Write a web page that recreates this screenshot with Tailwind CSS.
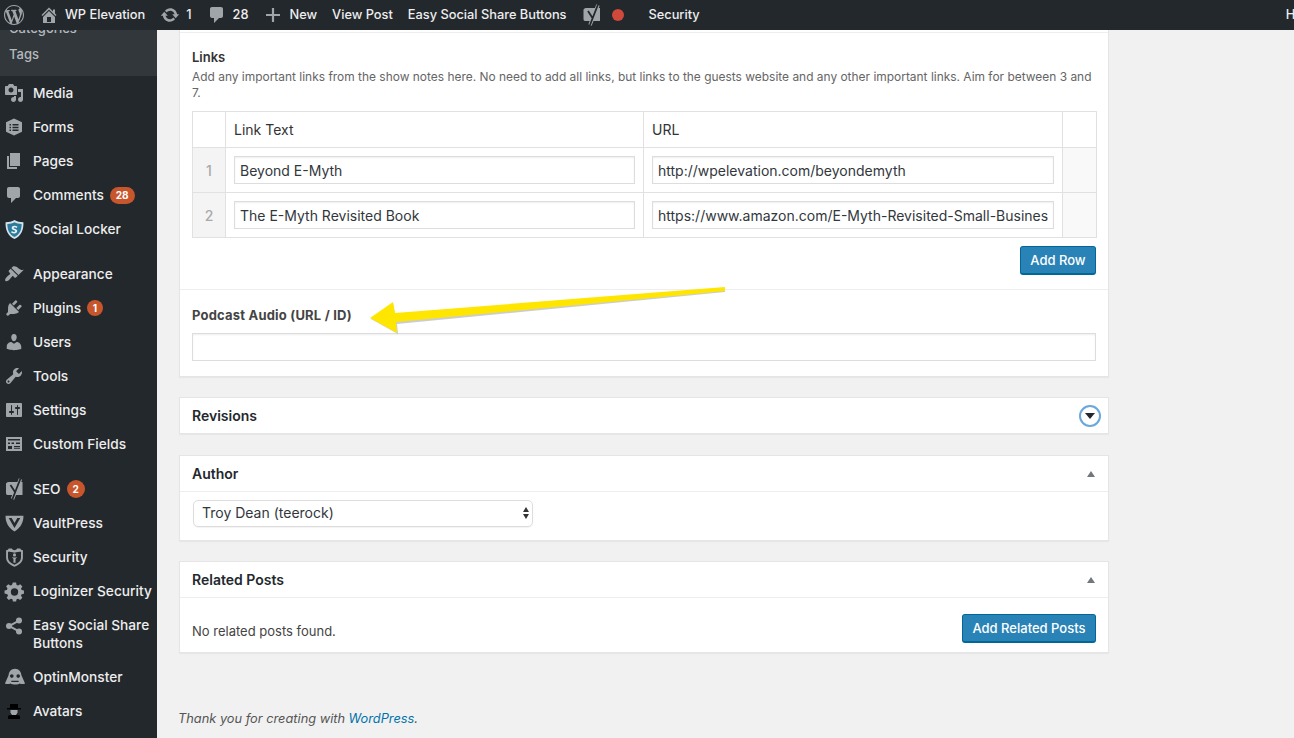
<!DOCTYPE html>
<html lang="en">

<head>
    <meta charset="UTF-8">
    <title>Edit Post</title>
    <script src="https://cdn.jsdelivr.net/npm/@tailwindcss/browser@4"></script>
</head>

<body class="h-[738px] w-[1294px] overflow-hidden bg-[#f1f1f1] font-['Inter',sans-serif] text-[14px] text-[#444]">
    <!-- admin bar -->
    <header class="relative z-10 flex h-[30px] items-center overflow-hidden whitespace-nowrap bg-[#23282d] text-[12.800px] font-medium text-[#eee]">
        <svg class="ml-[4px] h-[20px] w-[20px] shrink-0 fill-[#a0a5aa]" viewBox="0 0 20 20"><path d="M20 10c0-5.51-4.49-10-10-10C4.48 0 0 4.49 0 10c0 5.52 4.48 10 10 10 5.51 0 10-4.48 10-10zM7.78 15.37L4.37 6.22c.55-.02 1.17-.08 1.17-.08.5-.06.44-1.13-.06-1.11 0 0-1.45.11-2.37.11-.18 0-.37 0-.58-.01C4.12 2.69 6.87 1.11 10 1.11c2.33 0 4.45.87 6.05 2.34-.68-.11-1.65.39-1.65 1.58 0 .74.45 1.36.9 2.1.35.61.55 1.36.55 2.46 0 1.49-1.4 5-1.4 5l-3.03-8.37c.54-.02.82-.17.82-.17.5-.05.44-1.25-.06-1.22 0 0-1.44.12-2.38.12-.87 0-2.33-.12-2.33-.12-.5-.03-.56 1.2-.06 1.22l.92.08 1.26 3.41zM17.41 10c.24-.64.74-1.87.43-4.25.7 1.29 1.05 2.71 1.05 4.25 0 3.29-1.73 6.24-4.4 7.78.97-2.59 1.94-5.2 2.92-7.78zM6.1 18.09C3.12 16.65 1.11 13.53 1.11 10c0-1.3.23-2.48.72-3.59C3.25 10.3 4.67 14.2 6.1 18.09zm4.03-6.63l2.58 6.98c-.86.29-1.76.45-2.71.45-.79 0-1.57-.11-2.29-.33.81-2.38 1.62-4.74 2.42-7.1z"/></svg>
        <svg class="ml-[15px] h-[20px] w-[20px] shrink-0 fill-[#a0a5aa]" viewBox="0 0 20 20"><path d="M16 8.5l1.53 1.53-1.06 1.06L10 4.62l-6.47 6.47-1.06-1.06L10 2.5l4 4v-2h2v4zm-6-2.46l6 5.99V18H4v-5.97zM12 17v-5H8v5h4z"/></svg>
        <span class="ml-[6px]">WP Elevation</span>
        <svg class="ml-[15px] h-[20px] w-[20px] shrink-0 fill-[#a0a5aa]" viewBox="0 0 20 20"><path d="M10.2 3.28c3.53 0 6.43 2.61 6.92 6h2.08l-3.5 4-3.5-4h2.32c-.45-1.97-2.21-3.45-4.32-3.45-1.45 0-2.73.71-3.54 1.78L4.95 5.66C6.23 4.2 8.11 3.28 10.2 3.28zm-.4 13.44c-3.52 0-6.43-2.61-6.92-6H.8l3.5-4c1.17 1.33 2.33 2.67 3.5 4H5.48c.45 1.97 2.21 3.45 4.32 3.45 1.45 0 2.73-.71 3.54-1.78l1.71 1.95c-1.28 1.46-3.15 2.38-5.25 2.38z"/></svg>
        <span class="ml-[6px]">1</span>
        <svg class="ml-[15px] h-[20px] w-[20px] shrink-0 fill-[#a0a5aa]" viewBox="0 0 20 20"><path d="M5 2h9c1.1 0 2 .9 2 2v7c0 1.1-.9 2-2 2h-2l-5 5v-5H5c-1.1 0-2-.9-2-2V4c0-1.1.9-2 2-2z"/></svg>
        <span class="ml-[6px]">28</span>
        <svg class="ml-[15px] h-[20px] w-[20px] shrink-0 fill-[#a0a5aa]" viewBox="0 0 20 20"><path d="M17 8.900v2.200h-5.900V17H8.900v-5.900H3V8.900h5.900V3h2.200v5.900H17z"/></svg>
        <span class="ml-[6px]">New</span>
        <span class="ml-[15px]">View Post</span>
        <span class="ml-[15px]">Easy Social Share Buttons</span>
        <svg class="ml-[16px] h-[24px] w-[18px] shrink-0" viewBox="0 0 18 24"><path fill="#a0a5aa" d="M3 5h14v13H2c-1 0-1.500-1-1.500-2V7c0-1 1-2 2.500-2z"/><path fill="none" stroke="#a0a5aa" stroke-width="3.500" d="M15 2L7 22"/><path fill="none" stroke="#23282d" stroke-width="1.800" d="M15 1.500L7 22M5 8l4.500 7"/></svg>
        <span class="ml-[11px] h-[12px] w-[12px] shrink-0 rounded-full bg-[#d0493a]"></span>
        <span class="ml-[25px]">Security</span>
        <span class="ml-[586px]">Howdy, Troy</span>
    </header>

    <div class="flex h-[708px]">
        <!-- sidebar -->
        <nav class="w-[157px] shrink-0 overflow-hidden bg-[#23282d] text-[13.700px] font-medium text-[#eee]">
            <ul class="-mt-[14px] bg-[#32373c] pb-[8px] text-[13px] text-[#b4b9be]">
                <li class="flex h-[26px] items-center pl-[9px]">Categories</li>
                <li class="flex h-[26px] items-center pl-[9px]">Tags</li>
            </ul>
            <a class="flex h-[34px] items-center pl-[4px]"><svg class="mr-[9px] h-[20px] w-[20px] shrink-0 fill-[#a0a5aa]" viewBox="0 0 20 20"><path d="M13 11V4c0-.55-.45-1-1-1h-1.670L9 1H5L3.670 3H2c-.55 0-1 .45-1 1v7c0 .55.45 1 1 1h10c.55 0 1-.45 1-1zM7 4.500c1.380 0 2.500 1.120 2.500 2.500S8.380 9.500 7 9.500 4.500 8.380 4.500 7 5.620 4.500 7 4.500zM14 6h5v10.500c0 1.380-1.120 2.500-2.500 2.500S14 17.880 14 16.500s1.120-2.500 2.500-2.500c.17 0 .34.02.5.05V9h-3V6zm-4 8.050V13h2v3.500c0 1.380-1.120 2.500-2.500 2.500S7 17.880 7 16.500 8.120 14 9.500 14c.17 0 .34.02.5.05z"/></svg>Media</a>
            <a class="flex h-[34px] items-center pl-[4px]"><svg class="mr-[9px] h-[20px] w-[20px] shrink-0 fill-[#a0a5aa]" viewBox="0 0 20 20"><path fill-rule="evenodd" d="M10 1.500l8 3.700v9.600L10 18.500l-8-3.700V5.200zM5.500 7v1.500H7V7zm3 0v1.500h6V7zm-3 2.800v1.500H7V9.800zm3 0v1.500h6V9.800zm-3 2.700V14H7v-1.500zm3 0V14h6v-1.500z"/></svg>Forms</a>
            <a class="flex h-[34px] items-center pl-[4px]"><svg class="mr-[9px] h-[20px] w-[20px] shrink-0 fill-[#a0a5aa]" viewBox="0 0 20 20"><path d="M6 15V2h10v13H6zm-1 1h8v2H3V5h2v11z"/></svg>Pages</a>
            <a class="flex h-[34px] items-center pl-[4px]"><svg class="mr-[9px] h-[20px] w-[20px] shrink-0 fill-[#a0a5aa]" viewBox="0 0 20 20"><path d="M5 2h9c1.100 0 2 .9 2 2v7c0 1.100-.9 2-2 2h-2l-5 5v-5H5c-1.100 0-2-.9-2-2V4c0-1.100.9-2 2-2z"/></svg>Comments<span class="ml-[6px] flex h-[17px] items-center rounded-full bg-[#c8562c] px-[6px] text-[10px] font-bold text-white">28</span></a>
            <a class="flex h-[34px] items-center pl-[4px]"><svg class="mr-[8px] h-[21px] w-[21px] shrink-0" viewBox="0 0 20 20"><path fill="#d5e3ea" d="M10 1c2.500 1.500 5 2 8.500 2 .3 7-2 13-8.500 16C3.500 16 1.200 10 1.500 3 5 3 7.500 2.500 10 1z"/><path fill="#2c7a9c" d="M10 3.200c2 1 4 1.500 6.800 1.600 0 5.500-1.800 10-6.800 12.300-5-2.300-6.800-6.800-6.800-12.300C6 4.700 8 4.200 10 3.200z"/><path fill="#e8f1f5" d="M12.800 7.300c-.8-.5-1.800-.8-2.800-.8-1.500 0-2.700.8-2.700 2.100 0 2.300 3.500 1.700 3.500 2.900 0 .5-.5.8-1.100.8-.8 0-1.700-.4-2.300-.9l-.6 1.400c.8.6 1.900.9 2.900.9 1.700 0 2.900-.9 2.900-2.300 0-2.400-3.500-1.800-3.500-2.900 0-.4.4-.6 1-.6.7 0 1.400.2 2 .6z"/></svg>Social Locker</a>

            <a class="mt-[11px] flex h-[34px] items-center pl-[4px]"><svg class="mr-[9px] h-[20px] w-[20px] shrink-0 fill-[#a0a5aa]" viewBox="0 0 20 20"><path d="M14.480 11.060L7.410 3.990l1.500-1.500c.5-.56 2.300-.47 3.510.32 1.210.8 1.430 1.280 2.910 2.100 1.180.64 2.450 1.260 4.450.85zm-.71.71L6.700 4.700 4.930 6.470c-.39.39-.39 1.020 0 1.410l1.060 1.060c.39.39.39 1.030 0 1.420-.6.6-1.430 1.110-2.210 1.690-.35.26-.7.53-1.010.84-1.340 1.340-2.270 3-1.270 4s2.660.07 4-1.270c.31-.31.58-.66.84-1.010.58-.78 1.090-1.610 1.690-2.210.39-.39 1.030-.39 1.420 0l1.060 1.060c.39.39 1.020.39 1.410 0z"/></svg>Appearance</a>
            <a class="flex h-[34px] items-center pl-[4px]"><svg class="mr-[9px] h-[20px] w-[20px] shrink-0 fill-[#a0a5aa]" viewBox="0 0 20 20"><path d="M13.110 4.360L9.870 7.600 8 5.730l3.240-3.240c.35-.34 1.050-.2 1.560.32.52.51.66 1.210.31 1.550zm-8 1.770l.91-1.120 9.010 9.010-1.190.84c-.71.71-2.630 1.160-3.820 1.160H6.140L4.900 17.260c-.59.59-1.540.59-2.120 0-.59-.58-.59-1.530 0-2.120l1.240-1.240v-3.880c0-1.130.4-3.190 1.090-3.890zm7.260 3.970l3.240-3.240c.34-.35 1.040-.21 1.550.31.52.51.66 1.210.31 1.550l-3.240 3.250z"/></svg>Plugins<span class="ml-[6px] flex h-[16px] w-[16px] items-center justify-center rounded-full bg-[#c8562c] text-[10px] font-bold text-white">1</span></a>
            <a class="flex h-[34px] items-center pl-[4px]"><svg class="mr-[9px] h-[20px] w-[20px] shrink-0 fill-[#a0a5aa]" viewBox="0 0 20 20"><path d="M10 9.250c-2.270 0-2.730-3.440-2.730-3.440C7 4.020 7.820 2 9.970 2c2.160 0 2.980 2.020 2.710 3.810 0 0-.41 3.440-2.680 3.440zm0 2.570L12.720 10c2.390 0 4.520 2.330 4.520 4.530v2.490s-3.650 1.130-7.240 1.130c-3.650 0-7.240-1.130-7.240-1.130v-2.490c0-2.250 1.940-4.480 4.470-4.480z"/></svg>Users</a>
            <a class="flex h-[34px] items-center pl-[4px]"><svg class="mr-[9px] h-[20px] w-[20px] shrink-0 fill-[#a0a5aa]" viewBox="0 0 20 20"><path d="M16.680 9.770c-1.340 1.340-3.300 1.670-4.950.99l-5.410 6.520c-.99.99-2.590.99-3.580 0s-.99-2.590 0-3.570l6.520-5.420c-.68-1.650-.35-3.610.99-4.950 1.280-1.280 3.120-1.620 4.720-1.060l-2.890 2.890 2.820 2.820 2.860-2.870c.53 1.580.18 3.390-1.080 4.650zM3.810 16.210c.4.39 1.040.39 1.430 0 .4-.4.4-1.040 0-1.430-.39-.4-1.030-.4-1.430 0-.39.39-.39 1.030 0 1.430z"/></svg>Tools</a>
            <a class="flex h-[34px] items-center pl-[4px]"><svg class="mr-[9px] h-[20px] w-[20px] shrink-0 fill-[#a0a5aa]" viewBox="0 0 20 20"><path d="M18 16V4c0-.55-.45-1-1-1H3c-.55 0-1 .45-1 1v12c0 .55.45 1 1 1h14c.55 0 1-.45 1-1zM8 11h1c.55 0 1 .45 1 1s-.45 1-1 1H8v1.500c0 .28-.22.5-.5.5s-.5-.22-.5-.5V13H6c-.55 0-1-.45-1-1s.45-1 1-1h1V5.500c0-.28.22-.5.5-.5s.5.22.5.5V11zm5-2h-1c-.55 0-1-.45-1-1s.45-1 1-1h1V5.500c0-.28.22-.5.5-.5s.5.22.5.5V7h1c.55 0 1 .45 1 1s-.45 1-1 1h-1v5.500c0 .28-.22.5-.5.5s-.5-.22-.5-.5V9z"/></svg>Settings</a>
            <a class="flex h-[34px] items-center pl-[4px]"><svg class="mr-[9px] h-[20px] w-[20px] shrink-0 fill-[#a0a5aa]" viewBox="0 0 20 20"><path fill-rule="evenodd" d="M2 3h16v14H2zm2 2v1.500h12V5zm0 3.500V10h2V8.500zm3.500 0V10H10V8.500zM12 8.500V10h4V8.500zM4 12v3h4v-3zm6 0v1.300h6V12zm0 2.200V15h6v-.8z"/></svg>Custom Fields</a>

            <a class="mt-[11px] flex h-[34px] items-center pl-[4px]"><svg class="mr-[8px] h-[24px] w-[21px] shrink-0" viewBox="0 0 18 24"><path fill="#a0a5aa" d="M3 5h14v13H2c-1 0-1.500-1-1.500-2V7c0-1 1-2 2.500-2z"/><path fill="none" stroke="#a0a5aa" stroke-width="3.500" d="M15 2L7 22"/><path fill="none" stroke="#23282d" stroke-width="1.800" d="M15 1.500L7 22M5 8l4.500 7"/></svg>SEO<span class="ml-[6px] flex h-[18px] w-[18px] items-center justify-center rounded-full bg-[#c8562c] text-[10px] font-bold text-white">2</span></a>
            <a class="flex h-[34px] items-center pl-[4px]"><svg class="mr-[8px] h-[21px] w-[21px] shrink-0 fill-[#a0a5aa]" viewBox="0 0 20 20"><path fill-rule="evenodd" d="M1.500 2.500h17c.3 5.500-2.500 11.500-8.500 15-6-3.500-8.800-9.500-8.500-15zm3 2.300l5.500 9.500 5.500-9.500h-2.800L10 9.500 7.300 4.800z"/></svg>VaultPress</a>
            <a class="flex h-[34px] items-center pl-[4px]"><svg class="mr-[8px] h-[21px] w-[21px] shrink-0 fill-[#a0a5aa]" viewBox="0 0 20 20"><path fill-rule="evenodd" d="M2 3c1.500 0 2-.5 2.500-1.500h3C8 2.500 9 3 10 3s2-.5 2.500-1.500h3C16 2.500 16.500 3 18 3v7c0 4-3 7-8 8.800C5 17 2 14 2 10zm1.800 1.500V10c0 3 2.300 5.300 6.200 6.800 3.900-1.500 6.200-3.800 6.200-6.800V4.500C14.500 4.500 12 4.500 10 5.500 8 4.500 5.500 4.500 3.800 4.500zM10 6a1.500 1.500 0 110 3 1.500 1.500 0 010-3zM7.500 9.500l1.500.5h2l1.500-.5-1.500 2v3.500h-2v-3.500z"/></svg>Security</a>
            <a class="flex h-[34px] items-center pl-[4px]"><svg class="mr-[8px] h-[21px] w-[21px] shrink-0 fill-[#a0a5aa]" viewBox="0 0 20 20"><path fill-rule="evenodd" d="M8.500 1.500h3l.5 2.300 1.400.6 2-1.300 2.100 2.100-1.300 2 .6 1.400 2.200.5v3l-2.200.5-.6 1.400 1.300 2-2.100 2.100-2-1.300-1.400.6-.5 2.200h-3l-.5-2.200-1.400-.6-2 1.300-2.100-2.100 1.300-2-.6-1.400L.5 12V9l2.200-.5.6-1.400-1.300-2 2.100-2.100 2 1.300 1.400-.6zM10 7a3.500 3.500 0 100 7 3.500 3.500 0 000-7z"/></svg>Loginizer Security</a>
            <a class="flex h-[52px] items-center pl-[4px] leading-[18px]"><svg class="mr-[9px] -mt-[16px] h-[20px] w-[20px] shrink-0 fill-[#a0a5aa]" viewBox="0 0 20 20"><circle cx="15" cy="4.500" r="3"/><circle cx="15" cy="15.500" r="3"/><circle cx="5" cy="10" r="3"/><path d="M5 9l9.500-5.300.9 1.700L6 10.800zM6 9.200l9.400 5.400-.9 1.700L5 11z"/></svg><span>Easy Social Share<br>Buttons</span></a>
            <a class="flex h-[34px] items-center pl-[4px]"><svg class="mr-[7px] h-[22px] w-[22px] shrink-0 fill-[#a0a5aa]" viewBox="0 0 24 24"><path fill-rule="evenodd" d="M12 3c4 0 6.500 3 7 7l4 9c-2 1-4 1-6 0-1 1.500-8 1.500-10 0-2 1-4 1-6 0l4-9c.5-4 3-7 7-7zM8.500 9a2 2 0 100 4 2 2 0 000-4zm7 0a2 2 0 100 4 2 2 0 000-4zM8 16v1.500h8V16z"/></svg>OptinMonster</a>
            <a class="flex h-[34px] items-center pl-[4px]"><svg class="mr-[9px] h-[20px] w-[20px] shrink-0" viewBox="0 0 20 20"><path fill="#000" d="M6 3h8v4h3v1.500H3V7h3zM4 15c1-1 2-1 3-1h6c1 0 2 0 3 1v3H4z"/><path fill="#a0a5aa" d="M6.500 9h7v2.500l-1.500 2.500H8l-1.500-2.500z"/></svg>Avatars</a>
        </nav>

        <!-- post boxes -->
        <main class="relative flex-1 pl-[22px]">
            <section class="h-[347px] w-[930px] border-x border-b border-[#e5e5e5] bg-white shadow-[0_1px_1px_rgba(0,0,0,0.04)]">
                <div class="h-[2px]"></div>
                <div class="border-t border-[#eee] px-[12px] pt-[16px]">
                    <h3 class="text-[13px] font-semibold leading-[16px] text-[#333]">Links</h3>
                    <p class="mt-[4px] text-[11.950px] leading-[16px] text-[#666]">Add any important links from the show notes here. No need to add all links, but links to the guests website and any other important links. Aim for between 3 and 7.</p>
                    <table class="mt-[10px] w-[904px] table-fixed border-collapse border border-[#e1e1e1] text-[14px]">
                        <colgroup><col class="w-[33px]"><col class="w-[418px]"><col class="w-[419px]"><col class="w-[34px]"></colgroup>
                        <tr class="h-[36px]">
                            <th class="border border-[#e1e1e1]"></th>
                            <th class="border border-[#e1e1e1] pl-[8px] text-left font-normal text-[#333]">Link Text</th>
                            <th class="border border-[#e1e1e1] pl-[8px] text-left font-normal text-[#333]">URL</th>
                            <th class="border border-[#e1e1e1]"></th>
                        </tr>
                        <tr class="h-[45px]">
                            <td class="border border-[#e1e1e1] bg-[#f4f4f4] text-center font-medium text-[#aaa]">1</td>
                            <td class="border border-[#e1e1e1] px-[8px]"><input class="block h-[28px] w-[401px] border border-[#ddd] px-[5px] text-[#32373c] shadow-[inset_0_1px_2px_rgba(0,0,0,0.07)] outline-none" value="Beyond E-Myth"></td>
                            <td class="border border-[#e1e1e1] px-[8px]"><input class="block h-[28px] w-[402px] border border-[#ddd] px-[5px] text-[#32373c] shadow-[inset_0_1px_2px_rgba(0,0,0,0.07)] outline-none" value="http://wpelevation.com/beyondemyth"></td>
                            <td class="border border-[#e1e1e1] bg-[#f9f9f9]"></td>
                        </tr>
                        <tr class="h-[45px]">
                            <td class="border border-[#e1e1e1] bg-[#f4f4f4] text-center font-medium text-[#aaa]">2</td>
                            <td class="border border-[#e1e1e1] px-[8px]"><input class="block h-[28px] w-[401px] border border-[#ddd] px-[5px] text-[#32373c] shadow-[inset_0_1px_2px_rgba(0,0,0,0.07)] outline-none" value="The E-Myth Revisited Book"></td>
                            <td class="border border-[#e1e1e1] px-[8px]"><input class="block h-[28px] w-[402px] border border-[#ddd] px-[5px] text-[#32373c] shadow-[inset_0_1px_2px_rgba(0,0,0,0.07)] outline-none" value="https://www.amazon.com/E-Myth-Revisited-Small-Business-Doesnt-Work"></td>
                            <td class="border border-[#e1e1e1] bg-[#f9f9f9]"></td>
                        </tr>
                    </table>
                    <div class="mt-[8px] flex justify-end">
                        <button class="h-[29px] w-[76px] rounded-[3px] border border-[#006799] border-b-2 bg-[#2a83b6] pt-[1px] text-[13px] font-medium text-white">Add Row</button>
                    </div>
                </div>
                <div class="mt-[14px] border-t border-[#eee] px-[12px] pt-[17px]">
                    <h3 class="text-[13px] font-bold leading-[16px] tracking-[0.2px] text-[#444]">Podcast Audio (URL / ID)</h3>
                    <input class="mt-[10px] block h-[28px] w-[904px] border border-[#ddd] shadow-[inset_0_1px_2px_rgba(0,0,0,0.07)] outline-none">
                </div>
            </section>

            <section class="mt-[20px] flex h-[37px] w-[930px] items-center justify-between border border-[#e5e5e5] bg-white pl-[12px] pr-[7px] shadow-[0_1px_1px_rgba(0,0,0,0.04)]">
                <h2 class="text-[14px] font-semibold text-[#23282d]">Revisions</h2>
                <span class="flex h-[22px] w-[22px] items-center justify-center rounded-full border-2 border-[#6aa7dc] bg-white"><span class="mt-[1px] h-0 w-0 border-x-[5px] border-t-[6px] border-x-transparent border-t-[#23282d]"></span></span>
            </section>

            <section class="mt-[21px] h-[86px] w-[930px] border border-[#e5e5e5] bg-white shadow-[0_1px_1px_rgba(0,0,0,0.04)]">
                <div class="flex h-[36px] items-center justify-between border-b border-[#eee] pl-[12px] pr-[13px]">
                    <h2 class="text-[14px] font-semibold text-[#23282d]">Author</h2>
                    <span class="h-0 w-0 border-x-[4.500px] border-b-[6px] border-x-transparent border-b-[#72777c]"></span>
                </div>
                <div class="relative ml-[13px] mt-[8px] flex h-[27px] w-[340px] items-center rounded-[5px] border border-[#ddd] pb-[2px] pl-[8px] text-[14px] text-[#32373c] shadow-[0_1px_1px_rgba(0,0,0,0.05)]">
                    Troy Dean (teerock)
                    <span class="absolute right-[3px] top-[6px] flex flex-col gap-[2px]">
                        <span class="h-0 w-0 border-x-[3px] border-b-[5px] border-x-transparent border-b-[#333]"></span>
                        <span class="h-0 w-0 border-x-[3px] border-t-[5px] border-x-transparent border-t-[#333]"></span>
                    </span>
                </div>
            </section>

            <section class="mt-[20px] h-[92px] w-[930px] border border-[#e5e5e5] bg-white shadow-[0_1px_1px_rgba(0,0,0,0.04)]">
                <div class="flex h-[36px] items-center justify-between border-b border-[#eee] pl-[12px] pr-[13px]">
                    <h2 class="text-[14px] font-semibold text-[#23282d]">Related Posts</h2>
                    <span class="h-0 w-0 border-x-[4.500px] border-b-[6px] border-x-transparent border-b-[#72777c]"></span>
                </div>
                <div class="flex items-center justify-between pl-[12px] pr-[12px] pt-[16px]">
                    <p class="mt-[7px] text-[13px] text-[#444]">No related posts found.</p>
                    <button class="h-[29px] w-[134px] rounded-[3px] border border-[#006799] border-b-2 bg-[#2a83b6] pt-[1px] text-[13px] font-medium text-white">Add Related Posts</button>
                </div>
            </section>

            <p class="mt-[56px] -ml-[1px] text-[12.800px] italic text-[#555]">Thank you for creating with <a class="text-[#0073aa]">WordPress</a>.</p>

            <!-- annotation arrow -->
            <svg class="absolute left-0 top-0 h-[340px] w-[600px]" viewBox="0 0 600 340">
                <polygon fill="#999" opacity="0.5" points="214,289 236,273 238,284 568,259 568,262 240,294 241,304"/>
                <polygon fill="#ffe600" points="213,288 236,272 238,283 568,257 568,261 239,292 240,303"/>
            </svg>
        </main>
    </div>
</body>

</html>
